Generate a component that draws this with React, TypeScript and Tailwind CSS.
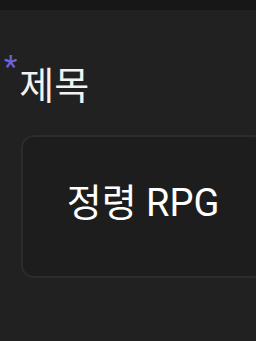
import React from 'react';

export default function App() {
  return (
    <div className="w-[256px] h-[341px] overflow-hidden bg-[#212121] flex flex-col" style={{ fontFamily: 'Roboto, "Noto Sans CJK KR", sans-serif' }}>
      <div className="h-[10px] bg-[#171717] shrink-0" />
      <div className="flex items-start pl-[4px] pt-[47px]">
        <span className="text-[#6f60dc] text-[31px] leading-none mt-[-6px]">*</span>
        <span className="text-[#f2f2f2] text-[38px] leading-none ml-[2px] mt-[10px]">제목</span>
      </div>
      <div className="ml-[21px] mt-[30px] w-[244px] h-[143px] shrink-0 rounded-[13px] border-2 border-[#2c2c2c] bg-[#1d1d1d] flex items-center justify-center pb-[7px]">
        <span className="text-white text-[38px] leading-none">정령 RPG</span>
      </div>
    </div>
  );
}
